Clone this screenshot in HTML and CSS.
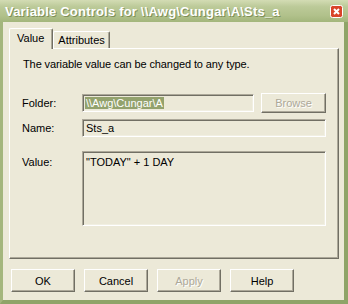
FILE: index.html
```html
<!DOCTYPE html>
<html lang="en">
<head>
  <meta charset="UTF-8" />
  <title>Variable Controls</title>
  <link rel="stylesheet" href="styles.css">
</head>
<body>
  <div class="window">
    <div class="titlebar">
      <span class="title">Variable Controls for \\Awg\Cungar\A\Sts_a</span>
      <span class="close">
        <svg width="13" height="13" viewBox="0 0 13 13">
          <rect x="0.5" y="0.5" width="12" height="12" rx="2" fill="#D9442A" stroke="#fff"/>
          <path d="M4 4 L9 9 M9 4 L4 9" stroke="#fff" stroke-width="2"/>
        </svg>
      </span>
    </div>

    <div class="content">
      <div class="tabs">
        <div class="tab active">Value</div>
        <div class="tab">Attributes</div>
      </div>

      <div class="panel">
        <p class="intro">The variable value can be changed to any type.</p>

        <div class="row folder-row">
          <label>Folder:</label>
          <div class="field"><span class="sel">\\Awg\Cungar\A</span></div>
          <button class="btn browse" disabled>Browse</button>
        </div>

        <div class="row name-row">
          <label>Name:</label>
          <div class="field">Sts_a</div>
        </div>

        <div class="row value-row">
          <label>Value:</label>
          <div class="field area">"TODAY" + 1 DAY</div>
        </div>
      </div>

      <div class="buttons">
        <button class="btn">OK</button>
        <button class="btn">Cancel</button>
        <button class="btn" disabled>Apply</button>
        <button class="btn">Help</button>
      </div>
    </div>
  </div>
</body>
</html>
```

FILE: styles.css
```css
body {
  margin: 0;
  font-family: "Liberation Sans", Arial, sans-serif;
  font-size: 11px;
  color: #000;
}

.window {
  width: 348px;
  height: 304px;
  box-sizing: border-box;
  background: #ECE9D8;
  border-left: 3px solid #A4B67D;
  border-right: 4px solid #8FA468;
  border-bottom: 4px solid #8FA468;
  display: flex;
  flex-direction: column;
}

.titlebar {
  height: 22px;
  margin: 0 -4px 0 -3px;
  background: linear-gradient(to bottom, #D3DCB4, #BCCA99 30%, #B1C18B 70%, #A3B67C);
  display: flex;
  align-items: center;
  justify-content: space-between;
  padding: 0 5px 0 5px;
}

.title {
  color: #fff;
  font-weight: bold;
  font-size: 13px;
  letter-spacing: 0.2px;
  text-shadow: 1px 1px 0 #7E8F58;
}

.close {
  display: flex;
  margin-top: 1px;
}

.content {
  padding: 6px 5px 0 6px;
  display: flex;
  flex-direction: column;
}

.tabs {
  display: flex;
  align-items: flex-end;
  height: 20px;
  position: relative;
  z-index: 1;
}

.tab {
  height: 16px;
  padding: 0 4px;
  border: 1px solid #fff;
  border-bottom: none;
  border-right: 1px solid #716F64;
  box-shadow: inset -1px 0 0 #ACA899;
  line-height: 17px;
  border-radius: 2px 2px 0 0;
}

.tab.active {
  height: 20px;
  line-height: 18px;
  padding: 0 8px 0 7px;
  background: #ECE9D8;
  margin-bottom: -1px;
}

.panel {
  height: 211px;
  box-sizing: border-box;
  border: 1px solid #fff;
  border-right-color: #716F64;
  border-bottom-color: #716F64;
  box-shadow: inset -1px -1px 0 #ACA899;
  padding: 0 12px 0 12px;
}

.intro {
  margin: 9px 0 0 1px;
  letter-spacing: -0.1px;
}

.row {
  display: flex;
  align-items: flex-start;
}

.row label {
  width: 60px;
  flex: none;
}

.field {
  flex: 1;
  height: 18px;
  box-sizing: border-box;
  border: 1px solid;
  border-color: #ACA899 #fff #fff #ACA899;
  box-shadow: inset 1px 1px 0 #716F64, inset -1px -1px 0 #F1EFE2;
  padding: 2px 3px 0 3px;
  line-height: 13px;
  white-space: nowrap;
}

.folder-row {
  margin-top: 23px;
  align-items: center;
}

.folder-row .field {
  flex: none;
  width: 172px;
  padding-left: 2px;
}

.sel {
  background: #93A26D;
  color: #fff;
  padding: 0 1px;
}

.name-row {
  margin-top: 6px;
}

.name-row label {
  padding-top: 3px;
}

.value-row label {
  padding-top: 5px;
}

.value-row {
  margin-top: 14px;
}

.field.area {
  height: 75px;
  padding-top: 4px;
}

.btn {
  font-family: inherit;
  font-size: 11px;
  color: #000;
  background: #ECE9D8;
  width: 64px;
  height: 23px;
  padding: 0;
  border: 1px solid;
  border-color: #fff #716F64 #716F64 #fff;
  box-shadow: inset -1px -1px 0 #ACA899;
}

.btn:disabled {
  color: #ACA899;
  text-shadow: 1px 1px 0 #fff;
}

.browse {
  width: 67px;
  height: 20px;
  margin-left: 7px;
}

.buttons {
  display: flex;
  gap: 9px;
  margin-top: 10px;
  padding-left: 2px;
}
```
